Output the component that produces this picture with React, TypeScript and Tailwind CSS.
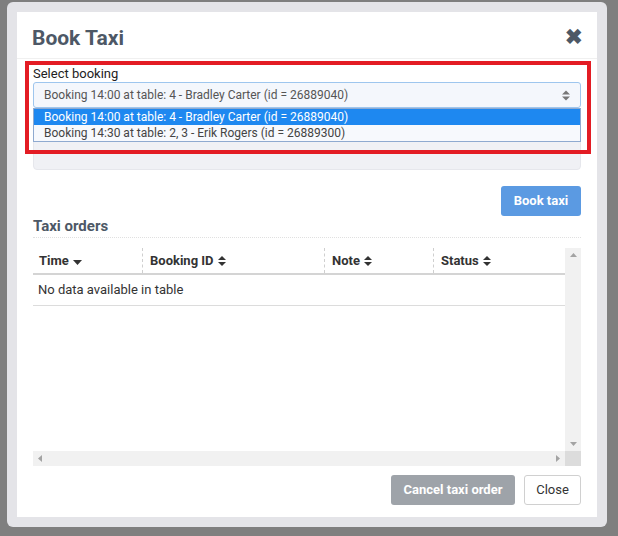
import React from "react";

function SortIcon() {
    return (
        <svg width="8" height="12" viewBox="0 0 8 12" className="inline-block ml-[4px]">
            <path d="M0 5 L4 1 L8 5 Z" fill="#333" />
            <path d="M0 7 L4 11 L8 7 Z" fill="#333" />
        </svg>
    );
}

function SortDesc() {
    return (
        <svg width="9" height="6" viewBox="0 0 9 6" className="inline-block ml-[4px] mt-[4px]">
            <path d="M0 0 L4.5 5 L9 0 Z" fill="#333" />
        </svg>
    );
}

function App() {
    return (
        <div className="w-[618px] h-[536px] bg-[#7f7f7f] overflow-hidden pt-[2px] pl-[7px] font-['Roboto',sans-serif]">
            {/* Modal frame */}
            <div className="w-[600px] h-[525px] bg-[#e4e4e8] rounded-[6px] p-[10px]">
                <div className="relative w-[580px] h-[505px] bg-white flex flex-col">
                    {/* Header */}
                    <div className="h-[47px] pl-[15px] pr-[14px] flex items-center justify-between border-b border-[#f0f0f0]">
                        <h1 className="text-[21px] font-bold text-[#4d5866] mt-[7px]">Book Taxi</h1>
                        <span className="text-[21px] font-bold text-[#4d5866] leading-none mt-[4px]">✖</span>
                    </div>

                    {/* Body */}
                    <div className="px-[16px] flex flex-col">
                        <label className="text-[13px] text-[#222] mt-[7px] leading-[16px]">Select booking</label>
                        <div className="relative">
                            <div className="h-[26px] border border-[#9ec6ee] rounded-[3px] bg-[#f4f7fc] flex items-center justify-between pl-[10px] pr-[10px] text-[12px] text-[#555]">
                                <span>Booking 14:00 at table: 4 - Bradley Carter (id = 26889040)</span>
                                <svg width="8" height="11" viewBox="0 0 8 11">
                                    <path d="M0 4.5 L4 0.5 L8 4.5 Z" fill="#777" />
                                    <path d="M0 6.5 L4 10.5 L8 6.5 Z" fill="#777" />
                                </svg>
                            </div>
                            {/* Open dropdown list */}
                            <div className="absolute left-0 right-0 top-[26px] z-10 border border-[#8faad0] bg-[#f7f9fd] text-[12px] leading-[16px]">
                                <div className="bg-[#1e88f0] text-white pl-[10px]">Booking 14:00 at table: 4 - Bradley Carter (id = 26889040)</div>
                                <div className="text-[#444] pl-[10px]">Booking 14:30 at table: 2, 3 - Erik Rogers (id = 26889300)</div>
                            </div>
                        </div>
                        <div className="h-[58px] mt-[4px] bg-[#f0f1f5] border border-[#e6e7ec] rounded-[4px]"></div>

                        <div className="flex justify-end mt-[16px]">
                            <button className="w-[80px] h-[30px] bg-[#5b9ae2] rounded-[3px] text-white text-[13px] font-bold">Book taxi</button>
                        </div>

                        <h2 className="text-[15px] font-bold text-[#4d5866] leading-[20px] pb-[1px] border-b border-dotted border-[#e0e0e0]">Taxi orders</h2>

                        {/* Table */}
                        <div className="mt-[10px] w-[548px] h-[218px] flex flex-col">
                            <div className="flex h-[203px]">
                                <div className="flex-1 flex flex-col">
                                    <div className="h-[27px] flex items-center text-[13px] font-bold text-[#333] border-b-2 border-[#d4d4d4]">
                                        <div className="w-[110px] pl-[6px] h-full flex items-center border-r border-dashed border-[#cfcfcf]">Time<SortDesc /></div>
                                        <div className="w-[182px] pl-[7px] h-full flex items-center border-r border-dashed border-[#cfcfcf]">Booking ID<SortIcon /></div>
                                        <div className="w-[109px] pl-[7px] h-full flex items-center border-r border-dashed border-[#cfcfcf]">Note<SortIcon /></div>
                                        <div className="flex-1 pl-[7px] h-full flex items-center">Status<SortIcon /></div>
                                    </div>
                                    <div className="h-[31px] flex items-center pl-[5px] text-[13px] text-[#333] border-b border-[#dcdcdc]">No data available in table</div>
                                </div>
                                {/* Vertical scrollbar */}
                                <div className="w-[16px] bg-[#f1f1f1] flex flex-col items-center justify-between py-[5px]">
                                    <svg width="7" height="4" viewBox="0 0 7 4"><path d="M0 4 L3.5 0 L7 4 Z" fill="#a3a3a3" /></svg>
                                    <svg width="7" height="4" viewBox="0 0 7 4"><path d="M0 0 L3.5 4 L7 0 Z" fill="#a3a3a3" /></svg>
                                </div>
                            </div>
                            {/* Horizontal scrollbar */}
                            <div className="flex h-[15px]">
                                <div className="flex-1 bg-[#f1f1f1] flex items-center justify-between px-[5px]">
                                    <svg width="4" height="7" viewBox="0 0 4 7"><path d="M4 0 L0 3.5 L4 7 Z" fill="#a3a3a3" /></svg>
                                    <svg width="4" height="7" viewBox="0 0 4 7"><path d="M0 0 L4 3.5 L0 7 Z" fill="#a3a3a3" /></svg>
                                </div>
                                <div className="w-[16px] bg-[#dcdcdc]"></div>
                            </div>
                        </div>

                        {/* Footer */}
                        <div className="flex justify-end gap-[9px] mt-[9px]">
                            <button className="w-[124px] h-[30px] bg-[#9ea3a9] rounded-[3px] text-white text-[13px] font-bold">Cancel taxi order</button>
                            <button className="w-[57px] h-[30px] bg-white border border-[#d0d0d0] rounded-[3px] text-[#333] text-[13px]">Close</button>
                        </div>
                    </div>

                    {/* Red annotation box */}
                    <div className="absolute left-[8px] top-[49px] w-[566px] h-[93px] border-[4px] border-[#e31c24] z-20 pointer-events-none"></div>
                </div>
            </div>
        </div>
    );
}

export default App;
